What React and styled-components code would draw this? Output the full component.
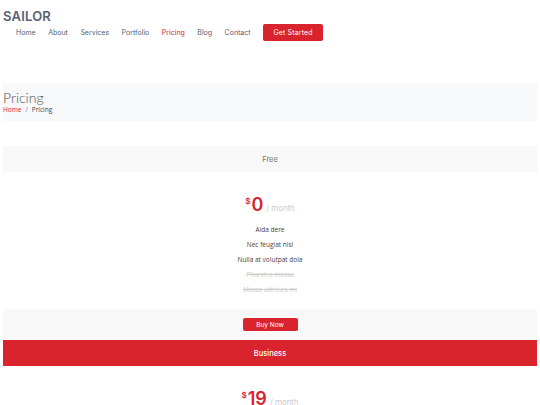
import React from 'react';
import styled, { createGlobalStyle } from 'styled-components';

const red = '#d9232d';

const Global = createGlobalStyle`
  body {
    margin: 0;
    background: #fff;
    font-family: "Open Sans", "Liberation Sans", sans-serif;
    color: #444;
  }
`;

const Page = styled.div`
  padding: 0 3px;
`;

const Header = styled.header`
  display: flex;
  flex-direction: column;
  padding-top: 9px;
`;

const Logo = styled.div`
  font-family: "Inter", "Open Sans", sans-serif;
  font-size: 13px;
  font-weight: 600;
  letter-spacing: 0.2px;
  color: #556270;
  line-height: 15px;
`;

const Nav = styled.nav`
  display: flex;
  align-items: center;
  gap: 12.5px;
  padding-left: 13px;
  height: 17px;
`;

const NavLink = styled.a`
  font-family: "Inter", "Open Sans", sans-serif;
  font-size: 7px;
  font-weight: 400;
  color: ${p => (p.$active ? red : '#556270')};
  text-decoration: none;
`;

const CtaButton = styled.a`
  display: flex;
  align-items: center;
  justify-content: center;
  width: 60px;
  height: 17px;
  background: ${red};
  border-radius: 2px;
  color: #fff;
  font-family: "Inter", "Open Sans", sans-serif;
  font-size: 7px;
  font-weight: 400;
  letter-spacing: 0.15px;
`;

const Breadcrumbs = styled.section`
  margin-top: 42px;
  height: 38px;
  background: #f8f9fa;
  display: flex;
  flex-direction: column;
  justify-content: center;
`;

const Title = styled.h2`
  margin: 0;
  font-family: "Lato", "Open Sans", sans-serif;
  font-weight: 300;
  font-size: 14px;
  line-height: 15px;
  color: #555;
`;

const Crumbs = styled.ol`
  display: flex;
  gap: 4px;
  list-style: none;
  margin: 0;
  padding: 0;
  font-size: 6.5px;
  line-height: 9px;
  color: #444;
`;

const Crumb = styled.li`
  color: ${p => (p.$link ? red : '#444')};
`;

const Sep = styled.li`
  color: #6c757d;
`;

const Spacer = styled.div`
  height: 25px;
`;

const Card = styled.div`
  display: flex;
  flex-direction: column;
`;

const CardHead = styled.h3`
  margin: 0;
  height: 26px;
  display: flex;
  align-items: center;
  justify-content: center;
  font-family: "Inter", "Open Sans", sans-serif;
  font-size: 7.5px;
  font-weight: ${p => (p.$featured ? 500 : 400)};
  background: ${p => (p.$featured ? red : '#f8f8f8')};
  color: ${p => (p.$featured ? '#fff' : '#777')};
`;

const Price = styled.h4`
  margin: 0;
  padding-top: 22px;
  height: 22px;
  display: flex;
  justify-content: center;
  align-items: baseline;
  font-family: "Inter", "Open Sans", sans-serif;
  color: ${red};
  font-size: 18px;
  font-weight: 600;
  line-height: 22px;
`;

const Currency = styled.span`
  font-size: 8px;
  font-weight: 600;
  position: relative;
  top: -7px;
  margin-right: 1px;
`;

const Period = styled.span`
  color: #bababa;
  font-size: 8px;
  font-weight: 300;
  margin-left: 3px;
`;

const Features = styled.ul`
  list-style: none;
  margin: 0;
  padding: 9px 0 15px;
  display: flex;
  flex-direction: column;
  align-items: center;
  gap: 6px;
`;

const Feature = styled.li`
  font-size: 6.5px;
  line-height: 9px;
  color: ${p => (p.$na ? '#ccc' : '#444')};
  text-decoration: ${p => (p.$na ? 'line-through' : 'none')};
`;

const CardFoot = styled.div`
  height: 31px;
  background: #f8f8f8;
  display: flex;
  align-items: center;
  justify-content: center;
`;

const BuyButton = styled.a`
  width: 55px;
  height: 13px;
  display: flex;
  align-items: center;
  justify-content: center;
  background: ${red};
  color: #fff;
  border-radius: 2px;
  font-family: "Inter", "Open Sans", sans-serif;
  font-size: 6.5px;
  font-weight: 400;
`;

const navItems = ['Home', 'About', 'Services', 'Portfolio', 'Pricing', 'Blog', 'Contact'];

const plans = [
  {
    name: 'Free',
    price: '0',
    features: [
      ['Aida dere', false],
      ['Nec feugiat nisl', false],
      ['Nulla at volutpat dola', false],
      ['Pharetra massa', true],
      ['Massa ultricies mi', true],
    ],
  },
  {
    name: 'Business',
    price: '19',
    featured: true,
    features: [
      ['Aida dere', false],
      ['Nec feugiat nisl', false],
      ['Nulla at volutpat dola', false],
      ['Pharetra massa', false],
      ['Massa ultricies mi', true],
    ],
  },
];

function PlanCard({ plan }) {
  return (
    <Card>
      <CardHead $featured={plan.featured}>{plan.name}</CardHead>
      <Price>
        <Currency>$</Currency>
        {plan.price}
        <Period>/ month</Period>
      </Price>
      <Features>
        {plan.features.map(([text, na]) => (
          <Feature key={text} $na={na}>{text}</Feature>
        ))}
      </Features>
      <CardFoot>
        <BuyButton>Buy Now</BuyButton>
      </CardFoot>
    </Card>
  );
}

export default function App() {
  return (
    <Page>
      <Global />
      <Header>
        <Logo>SAILOR</Logo>
        <Nav>
          {navItems.map(item => (
            <NavLink key={item} $active={item === 'Pricing'}>{item}</NavLink>
          ))}
          <CtaButton>Get Started</CtaButton>
        </Nav>
      </Header>
      <Breadcrumbs>
        <Title>Pricing</Title>
        <Crumbs>
          <Crumb $link>Home</Crumb>
          <Sep>/</Sep>
          <Crumb>Pricing</Crumb>
        </Crumbs>
      </Breadcrumbs>
      <Spacer />
      {plans.map(p => (
        <PlanCard key={p.name} plan={p} />
      ))}
    </Page>
  );
}
